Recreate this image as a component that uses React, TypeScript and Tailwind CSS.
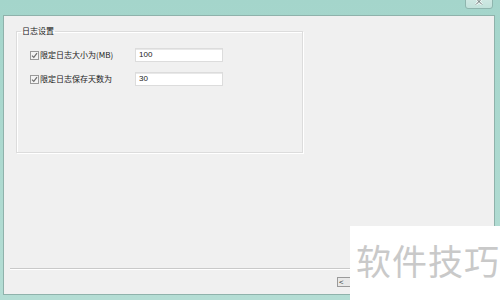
import React from "react";

const cjk = { fontFamily: '"Noto Sans CJK SC", "Noto Sans", sans-serif' };

function Check() {
  return (
    <span className="flex h-[9px] w-[9px] shrink-0 items-center justify-center border border-[#9a9a9a] bg-[#f4f4f4]">
      <svg width="7" height="7" viewBox="0 0 7 7">
        <path d="M1 3.6 L2.8 5.4 L6 1.2" fill="none" stroke="#6d6d6d" strokeWidth="1.2" />
      </svg>
    </span>
  );
}

function Row({ label, value }: { label: string; value: string }) {
  return (
    <div className="flex h-[14px] items-center">
      <div className="flex w-[118px] items-center gap-[1px] whitespace-nowrap pl-[13px]">
        <Check />
        <span className="text-[8px] leading-none text-[#222]" style={cjk}>{label}</span>
      </div>
      <div className="flex h-[14px] w-[88px] items-center border border-[#dcdcdc] bg-white pl-[3px] text-[8px] text-[#222] shadow-[inset_0_1px_0_#e8e8e8]" style={{ fontFamily: '"Liberation Sans", sans-serif' }}>
        {value}
      </div>
    </div>
  );
}

export default function App() {
  return (
    <div className="relative flex h-[300px] w-[500px] flex-col overflow-hidden bg-gradient-to-b from-[#a4d5cb] to-[#b4ddd4]">
      <div className="flex h-[15px] shrink-0 justify-end pr-[7px]">
        <div className="-mt-[7px] flex h-[16px] w-[28px] items-end justify-center rounded-b-[3px] border border-[#8fb5ae] bg-gradient-to-b from-[#d8ece8] to-[#c2e2db] pb-[3px]">
          <svg width="8" height="7" viewBox="0 0 8 7">
            <path d="M1 0.5 L7 6.5 M7 0.5 L1 6.5" stroke="#ffffff" strokeWidth="2.2" />
            <path d="M1 0.5 L7 6.5 M7 0.5 L1 6.5" stroke="#5a6d6a" strokeWidth="1" />
          </svg>
        </div>
      </div>
      <div className="ml-[3px] mr-[5px] flex h-[280px] shrink-0 flex-col border border-[#8fb2ab] bg-[#f0f0f0]">
        <div className="flex-1 pl-[12px] pt-[9px]">
          <fieldset className="h-[128px] w-[287px] border border-[#dcdcdc] px-0 shadow-[1px_1px_0_#ffffff,inset_1px_1px_0_#ffffff]">
            <legend className="ml-[4px] px-[1px] text-[8px] leading-[12px] text-[#222]" style={cjk}>日志设置</legend>
            <div className="flex flex-col gap-[10px] pt-[11px]">
              <Row label="限定日志大小为(MB)" value="100" />
              <Row label="限定日志保存天数为" value="30" />
            </div>
          </fieldset>
        </div>
        <div className="ml-[6px] mr-[2px] h-[2px] border-t border-[#c9c9c9] bg-white" />
        <div className="flex h-[24px] items-center pl-[333px]">
          <div className="flex h-[10px] w-[16px] items-center border border-[#9a9a9a] bg-[#e8e8e8] pl-[1px] text-[8px] leading-none text-[#333]" style={cjk}>
            &lt;
          </div>
        </div>
      </div>
      <div className="absolute left-[350px] top-[226px] flex h-[74px] w-[150px] items-start bg-white pl-[6px] pt-[14px]">
        <span className="text-[35px] leading-[40px] tracking-[1px] text-[#c9c9c9]" style={cjk}>软件技巧</span>
      </div>
    </div>
  );
}
